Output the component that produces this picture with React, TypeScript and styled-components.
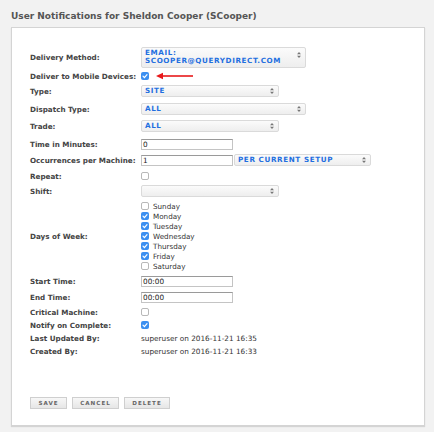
import React from "react"
import styled, { createGlobalStyle } from "styled-components"

// --- global ---
const GlobalStyle = createGlobalStyle`
  html, body {
    margin: 0;
    padding: 0;
    background: #f2f2f2;
    font-family: "DejaVu Sans", Verdana, sans-serif;
  }
`

const DAYS = [
  { name: "Sunday", on: false },
  { name: "Monday", on: true },
  { name: "Tuesday", on: true },
  { name: "Wednesday", on: true },
  { name: "Thursday", on: true },
  { name: "Friday", on: true },
  { name: "Saturday", on: false },
]

// --- small parts ---
function Arrows() {
  return (
    <svg width="4" height="6" viewBox="0 0 4 6">
      <path d="M2 0 L4 2.2 L0 2.2 Z M2 6 L4 3.8 L0 3.8 Z" fill="#777" />
    </svg>
  )
}

function Check({ on }: { on: boolean }) {
  return (
    <Box $on={on}>
      {on && (
        <svg width="8" height="8" viewBox="0 0 8 8">
          <path
            d="M2 4.2 L3.4 5.6 L6 2.6"
            stroke="#fff"
            strokeWidth="1.2"
            fill="none"
            strokeLinecap="round"
          />
        </svg>
      )}
    </Box>
  )
}

function Select({ w, children, two }: { w: number; children?: React.ReactNode; two?: boolean }) {
  return (
    <SelectBox $w={w} $two={two}>
      <SelectText>{children}</SelectText>
      <Arrows />
    </SelectBox>
  )
}

function RedArrow() {
  return (
    <svg width="38" height="8" viewBox="0 0 38 8">
      <path d="M5 4 L37 4" stroke="#e8191b" strokeWidth="1.6" />
      <path d="M0 4 L7 0.8 L7 7.2 Z" fill="#e8191b" />
    </svg>
  )
}

export default function App() {
  return (
    <>
      <GlobalStyle />
      <Page>
        <Title>User Notifications for Sheldon Cooper (SCooper)</Title>
        <Panel>
          <Form>
            <Row $h={22}>
              <Label>Delivery Method:</Label>
              <Select w={165} two>
                EMAIL:
                <br />
                SCOOPER@QUERYDIRECT.COM
              </Select>
            </Row>
            <Row $mt={2}>
              <Label>Deliver to Mobile Devices:</Label>
              <Field>
                <Check on />
                <ArrowWrap>
                  <RedArrow />
                </ArrowWrap>
              </Field>
            </Row>
            <Row $mt={3}>
              <Label>Type:</Label>
              <Select w={138}>SITE</Select>
            </Row>
            <Row $mt={6}>
              <Label>Dispatch Type:</Label>
              <Select w={165}>ALL</Select>
            </Row>
            <Row $mt={5}>
              <Label>Trade:</Label>
              <Select w={138}>ALL</Select>
            </Row>
            <Row $mt={6}>
              <Label>Time in Minutes:</Label>
              <Input defaultValue="0" />
            </Row>
            <Row $mt={4}>
              <Label>Occurrences per Machine:</Label>
              <Field>
                <Input defaultValue="1" />
                <Select w={137}>PER CURRENT SETUP</Select>
              </Field>
            </Row>
            <Row $mt={4}>
              <Label>Repeat:</Label>
              <Check on={false} />
            </Row>
            <Row $mt={3}>
              <Label>Shift:</Label>
              <Select w={138} />
            </Row>
            <Row $mt={4} $h={70}>
              <Label>Days of Week:</Label>
              <DayList>
                {DAYS.map(d => (
                  <Day key={d.name}>
                    <Check on={d.on} />
                    <span>{d.name}</span>
                  </Day>
                ))}
              </DayList>
            </Row>
            <Row $mt={4}>
              <Label>Start Time:</Label>
              <Input defaultValue="00:00" />
            </Row>
            <Row $mt={4}>
              <Label>End Time:</Label>
              <Input defaultValue="00:00" />
            </Row>
            <Row $mt={3}>
              <Label>Critical Machine:</Label>
              <Check on={false} />
            </Row>
            <Row $mt={1}>
              <Label>Notify on Complete:</Label>
              <Check on />
            </Row>
            <Row $mt={1}>
              <Label>Last Updated By:</Label>
              <Value>superuser on 2016-11-21 16:35</Value>
            </Row>
            <Row $mt={1}>
              <Label>Created By:</Label>
              <Value>superuser on 2016-11-21 16:33</Value>
            </Row>
          </Form>
          <Buttons>
            <Button $w={37}>SAVE</Button>
            <Button $w={47}>CANCEL</Button>
            <Button $w={46}>DELETE</Button>
          </Buttons>
        </Panel>
      </Page>
    </>
  )
}

// --- styled components ---
const Page = styled.div`
  padding: 8px 9px 6px 11px;
`

const Title = styled.h1`
  margin: 0 0 3px;
  font-size: 9px;
  line-height: 16px;
  font-weight: bold;
  color: #555;
  white-space: nowrap;
`

const Panel = styled.div`
  background: #fff;
  border: 1px solid #d4d4d4;
  box-shadow: 0 1px 1px rgba(0, 0, 0, 0.12);
  padding: 18px 0 16px 18px;
`

const Form = styled.div`
  display: flex;
  flex-direction: column;
`

const Row = styled.div<{ $h?: number; $mt?: number }>`
  display: grid;
  grid-template-columns: 111px 1fr;
  align-items: center;
  height: ${p => p.$h ?? 12}px;
  margin-top: ${p => p.$mt ?? 0}px;
`

const Label = styled.div`
  font-size: 7.2px;
  font-weight: bold;
  color: #444;
  white-space: nowrap;
`

const Field = styled.div`
  display: flex;
  align-items: center;
  gap: 1px;
`

const ArrowWrap = styled.div`
  display: flex;
  margin-left: 6px;
`

const SelectBox = styled.div<{ $w: number; $two?: boolean }>`
  box-sizing: border-box;
  width: ${p => p.$w}px;
  height: ${p => (p.$two ? 21 : 12)}px;
  display: flex;
  align-items: ${p => (p.$two ? "flex-start" : "center")};
  justify-content: space-between;
  padding: ${p => (p.$two ? "1px 4px 0 3px" : "0 4px 0 3px")};
  background: linear-gradient(#fbfbfb, #eeeeee);
  border: 1px solid #dadada;
  border-radius: 2px;

  svg {
    margin-top: ${p => (p.$two ? "3px" : "0")};
  }
`

const SelectText = styled.div`
  font-size: 7.2px;
  line-height: 8.5px;
  font-weight: bold;
  letter-spacing: 0.6px;
  color: #1f6fe0;
  white-space: nowrap;
`

const Input = styled.input`
  box-sizing: border-box;
  width: 92px;
  height: 11px;
  margin: 0;
  padding: 0 1px;
  border: 1px solid #c4c4c4;
  border-top-color: #9a9a9a;
  font-family: "DejaVu Sans", Verdana, sans-serif;
  font-size: 7.3px;
  color: #222;
  background: #fff;
  outline: none;
`

const Box = styled.span<{ $on: boolean }>`
  box-sizing: border-box;
  display: inline-flex;
  width: 8px;
  height: 8px;
  border-radius: 2px;
  background: ${p => (p.$on ? "#3b8ff0" : "#fff")};
  border: ${p => (p.$on ? "none" : "1px solid #b8b8b8")};
`

const DayList = styled.div`
  display: flex;
  flex-direction: column;
`

const Day = styled.div`
  display: flex;
  align-items: center;
  gap: 4px;
  height: 10px;
  font-size: 7.2px;
  color: #333;
`

const Value = styled.div`
  font-size: 7.3px;
  color: #333;
  white-space: nowrap;
`

const Buttons = styled.div`
  display: flex;
  gap: 5px;
  margin-top: 40px;
`

const Button = styled.button<{ $w: number }>`
  box-sizing: border-box;
  width: ${p => p.$w}px;
  height: 12px;
  padding: 0;
  border: 1px solid #cfcfcf;
  border-radius: 0;
  background: linear-gradient(#f7f7f7, #e6e6e6);
  font-family: "DejaVu Sans", Verdana, sans-serif;
  font-size: 5.6px;
  font-weight: bold;
  letter-spacing: 1px;
  color: #666;
`
